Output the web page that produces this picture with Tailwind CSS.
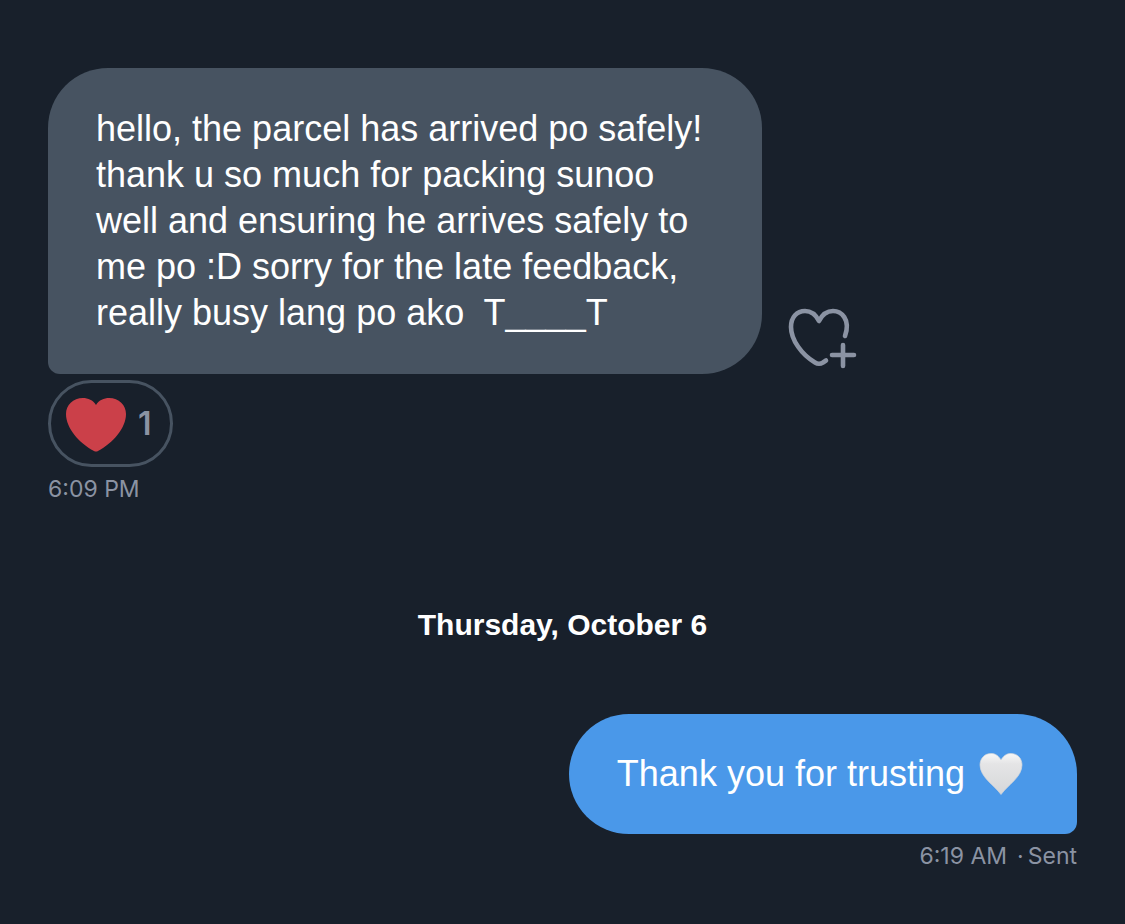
<!DOCTYPE html>
<html lang="en">
<head>
<meta charset="utf-8">
<meta name="viewport" content="width=device-width, initial-scale=1">
<title>Messages</title>
<script src="https://cdn.jsdelivr.net/npm/@tailwindcss/browser@4"></script>
</head>
<body class="min-h-screen bg-[#18202b] font-['Liberation_Sans',Arial,sans-serif] text-white">
<main class="flex flex-col px-12 pt-17 pb-12">
  <section class="flex flex-col items-start">
    <div class="flex items-end gap-6">
      <p class="rounded-[60px] rounded-bl-xl bg-[#475361] py-[38px] pr-15 pl-12 text-[36px] leading-[46px] whitespace-nowrap">hello, the parcel has arrived po safely!<br>thank u so much for packing sunoo<br>well and ensuring he arrives safely to<br>me po :D sorry for the late feedback,<br>really busy lang po ako&nbsp; T____T</p>
      <button type="button" aria-label="Add reaction" class="text-[#8b93a3]">
        <svg class="h-[70px] w-[74px]" viewBox="0 0 74 70" fill="none" stroke="currentColor" stroke-width="4.600" stroke-linecap="round" stroke-linejoin="round"><path d="M59 32C65 15 55 7 47 7C40 7 36 11 33 17C30 11 26 7 19 7C11 7 5 13 5 23C5 36 16 51 29 58.500Q33 61 37 58.500L40 56.500M57 41V62M46 51H68"/></svg>
      </button>
    </div>
    <button type="button" aria-label="Heart reaction, 1" class="mt-1.5 flex h-[87px] items-center gap-3 rounded-full border-3 border-[#475361] pr-[18px] pl-[15px] font-['Inter',sans-serif] text-[32px] font-semibold text-[#8b93a3]">
      <svg class="h-[56px] w-[60px]" viewBox="0 0 60 56" fill="#cb4049"><path d="M30 9C27 4 22 2 17 2C7 2 0 9 0 18C0 32 13 47 28 55Q30 56 32 55C47 47 60 32 60 18C60 9 53 2 43 2C38 2 33 4 30 9Z"/></svg>
      <span>1</span>
    </button>
    <time class="mt-1 font-['Inter',sans-serif] text-[23px] leading-9 text-[#8b93a3]">6:09 PM</time>
  </section>
  <h2 class="mt-[98px] text-center text-[30px] leading-10 font-bold">Thursday, October 6</h2>
  <section class="mt-[69px] flex flex-col items-end">
    <p class="flex items-center gap-3.5 rounded-[60px] rounded-br-xl bg-[#4a98e9] py-9 pr-[54px] pl-12 text-[36px] leading-[48px] whitespace-nowrap">Thank you for trusting
      <svg class="h-[43px] w-[44px]" viewBox="0 0 44 43" role="img" aria-label="white heart"><defs><linearGradient id="shine" x1="0" y1="0" x2="0" y2="1"><stop offset="0" stop-color="#f8f8f8"/><stop offset=".25" stop-color="#e5e5e6"/><stop offset="1" stop-color="#d6d7d9"/></linearGradient></defs><path fill="url(#shine)" stroke="#d0d4da" stroke-width=".7" d="M22 7C19 2 16 0.500 12 0.500C5 0.500 1 6 1 12C1 24 15 32 22 41.500C29 32 43 24 43 12C43 6 39 0.500 32 0.500C28 0.500 25 2 22 7Z"/></svg>
    </p>
    <p class="mt-1 flex gap-2.5 font-['Inter',sans-serif] text-[23px] leading-9 text-[#8b93a3]"><time>6:19 AM</time><span class="flex gap-1"><span>·</span><span>Sent</span></span></p>
  </section>
</main>
</body>
</html>
